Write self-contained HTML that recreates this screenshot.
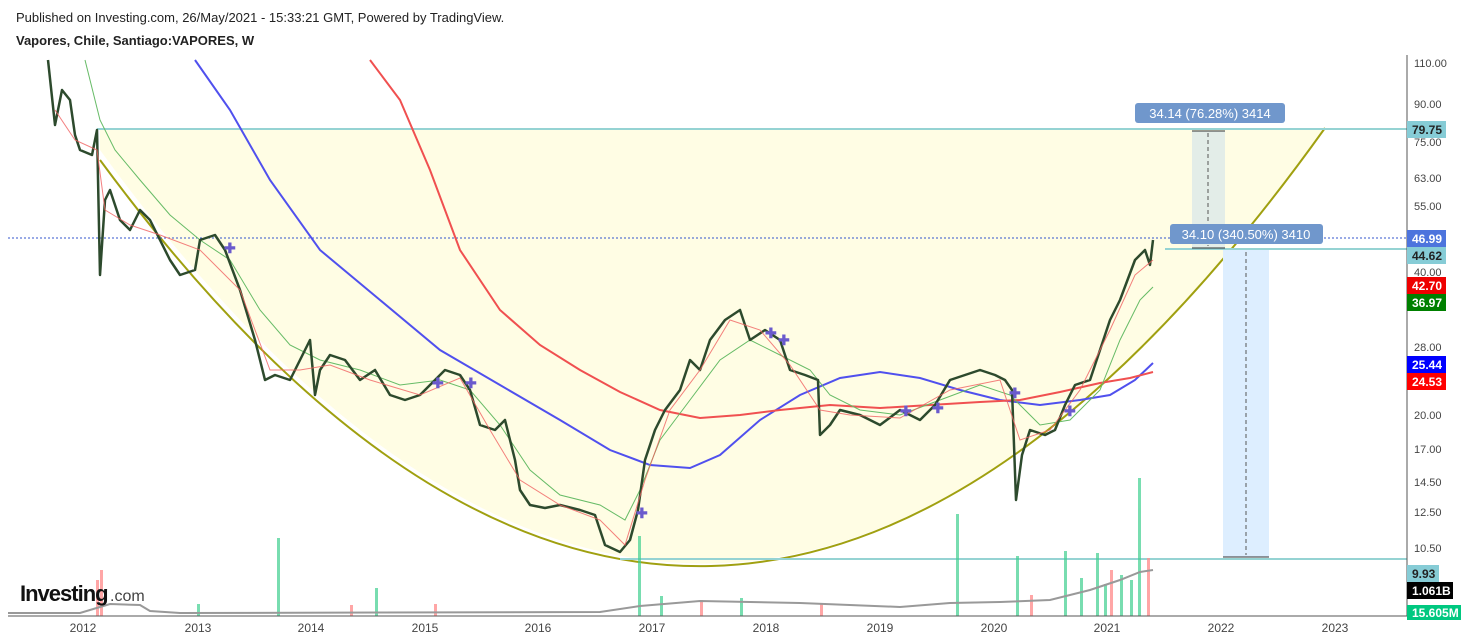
<!DOCTYPE html>
<html><head><meta charset="utf-8"><style>
body{margin:0;width:1468px;height:640px;background:#fff;overflow:hidden;font-family:"Liberation Sans",sans-serif;}
.t{position:absolute;left:16px;font-size:13px;color:#222;}
</style></head><body>
<div class="t" style="top:10px">Published on Investing.com, 26/May/2021 - 15:33:21 GMT, Powered by TradingView.</div>
<div class="t" style="top:33px;font-weight:bold">Vapores, Chile, Santiago:VAPORES, W</div>
<svg width="1468" height="640" style="position:absolute;left:0;top:0" font-family="Liberation Sans, sans-serif">
<path d="M100,150 Q710,988 1325,128 L100,128 Z" fill="#fffde4"/>
<path d="M100,160 Q710,988 1325,128" fill="none" stroke="#a0a010" stroke-width="2"/>
<line x1="97" y1="129" x2="1407" y2="129" stroke="#95d3d3" stroke-width="2"/>
<line x1="1165" y1="249" x2="1407" y2="249" stroke="#95d3d3" stroke-width="2"/>
<line x1="620" y1="559" x2="1407" y2="559" stroke="#95d3d3" stroke-width="2"/>
<line x1="8" y1="238" x2="1407" y2="238" stroke="#3355cc" stroke-dasharray="2,2"/>
<rect x="1192" y="131" width="33" height="117" fill="#e3ede8"/>
<line x1="1208" y1="133" x2="1208" y2="246" stroke="#555" stroke-dasharray="4,3"/>
<line x1="1192" y1="131" x2="1225" y2="131" stroke="#333"/><line x1="1192" y1="248" x2="1225" y2="248" stroke="#333"/>
<rect x="1223" y="250" width="46" height="307" fill="#ddeeff"/>
<line x1="1246" y1="252" x2="1246" y2="555" stroke="#555" stroke-dasharray="4,3"/>
<line x1="1223" y1="557" x2="1269" y2="557" stroke="#333"/>
<rect x="1135" y="103" width="150" height="20" rx="3" fill="#7097cc"/>
<text x="1210" y="118" fill="#fff" font-size="13" text-anchor="middle">34.14 (76.28%) 3414</text>
<rect x="1170" y="224" width="153" height="20" rx="3" fill="#7097cc"/>
<text x="1246" y="239" fill="#fff" font-size="13" text-anchor="middle">34.10 (340.50%) 3410</text>
<polyline fill="none" stroke="#5050ee" stroke-width="2" points="195,60 230,110 270,180 320,250 380,300 440,350 500,385 560,420 610,450 650,465 690,468 720,455 760,420 800,395 840,378 880,372 920,378 960,390 1000,400 1040,405 1080,400 1110,395 1135,380 1153,363"/>
<polyline fill="none" stroke="#f05050" stroke-width="2" points="370,60 400,100 430,170 460,250 500,310 540,345 580,370 620,392 660,410 700,418 740,415 780,410 830,405 880,408 930,405 980,402 1020,400 1060,392 1100,383 1130,378 1153,372"/>
<polyline fill="none" stroke="#66bb66" stroke-width="1" points="85,60 100,120 115,150 140,180 170,215 200,240 230,260 260,310 290,345 320,360 360,370 400,385 440,380 470,390 500,425 530,470 560,495 600,505 625,520 640,490 660,440 690,400 720,360 750,340 780,355 810,370 830,395 860,410 900,415 940,400 980,385 1010,395 1040,425 1070,420 1100,390 1120,340 1140,300 1153,287"/>
<polyline fill="none" stroke="#2d4a2d" stroke-width="2.5" stroke-linejoin="round" points="48,60 55,125 62,90 70,100 75,135 80,150 92,155 97,130 100,275 105,200 110,190 120,220 130,230 140,210 150,220 160,240 170,260 180,275 195,270 200,240 215,235 225,250 240,290 255,340 265,380 275,375 290,380 300,360 310,340 315,395 320,370 330,355 345,360 360,380 375,370 390,395 405,400 420,395 435,380 445,370 460,375 470,390 480,425 495,430 505,420 515,460 520,490 530,505 545,508 560,505 580,510 595,515 605,545 620,552 630,540 638,510 645,460 655,430 665,410 680,390 690,360 700,370 710,340 725,320 740,310 750,340 765,330 780,340 790,370 805,375 818,380 820,435 830,425 840,410 860,415 880,425 900,410 920,420 935,405 950,380 965,375 980,370 995,375 1005,380 1012,390 1016,500 1022,455 1030,430 1045,435 1055,430 1065,405 1075,385 1090,380 1100,350 1110,320 1120,300 1135,260 1145,250 1150,265 1153,240"/>
<polyline fill="none" stroke="#f06060" stroke-width="1" opacity=".8" points="55,110 75,140 97,150 105,210 130,225 160,235 200,250 240,290 270,370 300,370 330,365 370,380 420,395 460,378 490,430 520,480 560,505 600,520 625,545 645,480 670,410 700,370 730,320 760,330 790,365 820,410 850,415 900,418 950,390 1000,380 1020,440 1050,430 1080,390 1110,330 1135,275 1153,260"/>
<g fill="#6a5acd" font-size="14" font-weight="bold"><text x="224" y="253">✚</text><text x="432" y="388">✚</text><text x="465" y="388">✚</text><text x="636" y="518">✚</text><text x="765" y="338">✚</text><text x="778" y="345">✚</text><text x="900" y="416">✚</text><text x="932" y="413">✚</text><text x="1009" y="398">✚</text><text x="1064" y="416">✚</text></g>
<g fill="#ff9090" opacity=".8"><rect x="100" y="570" width="3" height="46"/><rect x="96" y="580" width="3" height="36"/><rect x="434" y="604" width="3" height="12"/><rect x="1030" y="595" width="3" height="21"/><rect x="1147" y="558" width="3" height="58"/><rect x="350" y="605" width="3" height="11"/><rect x="700" y="600" width="3" height="16"/><rect x="820" y="603" width="3" height="13"/><rect x="1110" y="570" width="3" height="46"/></g>
<g fill="#40d090" opacity=".7"><rect x="277" y="538" width="3" height="78"/><rect x="375" y="588" width="3" height="28"/><rect x="638" y="536" width="3" height="80"/><rect x="956" y="514" width="3" height="102"/><rect x="1016" y="556" width="3" height="60"/><rect x="1064" y="551" width="3" height="65"/><rect x="1096" y="553" width="3" height="63"/><rect x="1138" y="478" width="3" height="138"/><rect x="1120" y="575" width="3" height="41"/><rect x="1130" y="580" width="3" height="36"/><rect x="197" y="604" width="3" height="12"/><rect x="660" y="596" width="3" height="20"/><rect x="740" y="598" width="3" height="18"/><rect x="1080" y="578" width="3" height="38"/><rect x="1104" y="584" width="3" height="32"/></g>
<polyline fill="none" stroke="#999" stroke-width="2" points="8,613 80,613 100,607 110,604 140,605 150,611 180,613 600,612 640,606 700,601 800,603 900,607 950,603 1000,602 1050,600 1090,590 1120,580 1140,572 1153,570"/>
<line x1="8" y1="616" x2="1407" y2="616" stroke="#555"/>
<line x1="1407" y1="55" x2="1407" y2="616" stroke="#555"/>
<text x="20" y="601" font-size="22" font-weight="bold" fill="#111" letter-spacing="-1">Investing</text><text x="110" y="601" font-size="16" fill="#444">.com</text>
<g font-size="12" fill="#444" text-anchor="middle"><text x="83" y="632">2012</text><text x="198" y="632">2013</text><text x="311" y="632">2014</text><text x="425" y="632">2015</text><text x="538" y="632">2016</text><text x="652" y="632">2017</text><text x="766" y="632">2018</text><text x="880" y="632">2019</text><text x="994" y="632">2020</text><text x="1107" y="632">2021</text><text x="1221" y="632">2022</text><text x="1335" y="632">2023</text></g>
<g font-size="11" fill="#444"><text x="1414" y="67">110.00</text><text x="1414" y="108">90.00</text><text x="1414" y="146">75.00</text><text x="1414" y="182">63.00</text><text x="1414" y="210">55.00</text><text x="1414" y="276">40.00</text><text x="1414" y="351">28.00</text><text x="1414" y="419">20.00</text><text x="1414" y="453">17.00</text><text x="1414" y="486">14.50</text><text x="1414" y="516">12.50</text><text x="1414" y="552">10.50</text></g>
<g font-size="12" font-weight="bold"><rect x="1407" y="121" width="39" height="17" fill="#86ccd6"/><text x="1412" y="134" fill="#222">79.75</text>
<rect x="1407" y="230" width="39" height="17" fill="#4d74dd"/><text x="1412" y="243" fill="#fff">46.99</text>
<rect x="1407" y="247" width="39" height="17" fill="#86ccd6"/><text x="1412" y="260" fill="#222">44.62</text>
<rect x="1407" y="277" width="39" height="17" fill="#ee0000"/><text x="1412" y="290" fill="#fff">42.70</text>
<rect x="1407" y="294" width="39" height="17" fill="#008000"/><text x="1412" y="307" fill="#fff">36.97</text>
<rect x="1407" y="356" width="39" height="17" fill="#0000ff"/><text x="1412" y="369" fill="#fff">25.44</text>
<rect x="1407" y="373" width="39" height="17" fill="#ff0000"/><text x="1412" y="386" fill="#fff">24.53</text>
<rect x="1407" y="565" width="32" height="17" fill="#86ccd6"/><text x="1412" y="578" fill="#222">9.93</text>
<rect x="1407" y="582" width="46" height="17" fill="#000"/><text x="1412" y="595" fill="#fff">1.061B</text>
<rect x="1407" y="605" width="54" height="15" fill="#00c880"/><text x="1412" y="617" fill="#fff">15.605M</text></g>
</svg>
</body></html>
